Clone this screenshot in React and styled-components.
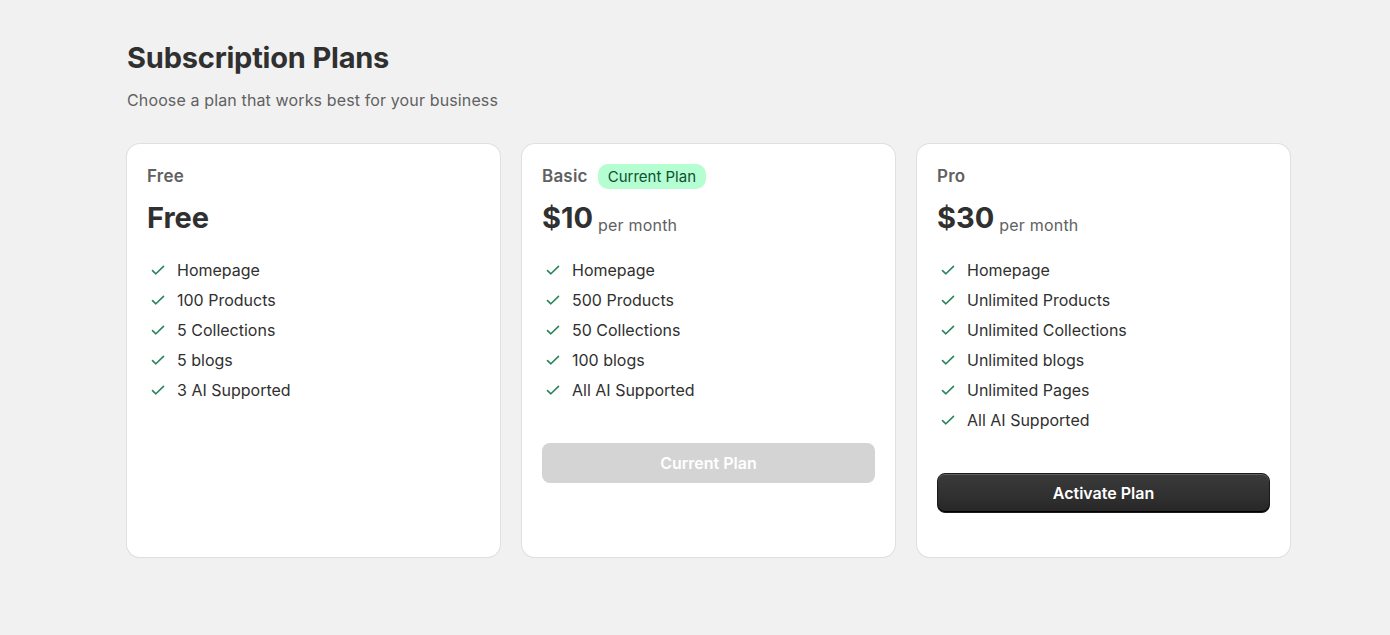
import React from 'react';
import styled, { createGlobalStyle } from 'styled-components';

const GlobalStyle = createGlobalStyle`
  body {
    margin: 0;
    background: #f1f1f1;
    font-family: Inter, "Noto Sans", sans-serif;
    color: #303030;
  }
`;

const plans = [
  {
    id: 'free',
    name: 'Free',
    price: 'Free',
    features: ['Homepage', '100 Products', '5 Collections', '5 blogs', '3 AI Supported']
  },
  {
    id: 'basic',
    name: 'Basic',
    price: '$10',
    period: 'per month',
    current: true,
    features: ['Homepage', '500 Products', '50 Collections', '100 blogs', 'All AI Supported']
  },
  {
    id: 'pro',
    name: 'Pro',
    price: '$30',
    period: 'per month',
    features: [
      'Homepage',
      'Unlimited Products',
      'Unlimited Collections',
      'Unlimited blogs',
      'Unlimited Pages',
      'All AI Supported'
    ]
  }
];

const CheckIcon = () => (
  <svg width="16" height="16" viewBox="0 0 16 16" fill="none">
    <path d="M2.5 8.6l3.4 3.2 7.6-7.4" stroke="#29845a" strokeWidth="1.6" strokeLinecap="round" strokeLinejoin="round" />
  </svg>
);

const App = () => {
  return (
    <>
      <GlobalStyle />
      <Page>
        <Title>Subscription Plans</Title>
        <Subtitle>Choose a plan that works best for your business</Subtitle>
        <Grid>
          {plans.map((plan) => (
            <Card key={plan.id}>
              <NameRow>
                <PlanName>{plan.name}</PlanName>
                {plan.current && <Badge>Current Plan</Badge>}
              </NameRow>
              <PriceRow>
                <Price>{plan.price}</Price>
                {plan.period && <Period>{plan.period}</Period>}
              </PriceRow>
              <FeatureList>
                {plan.features.map((f) => (
                  <Feature key={f}>
                    <CheckIcon />
                    {f}
                  </Feature>
                ))}
              </FeatureList>
              {plan.id !== 'free' && (
                <PlanButton disabled={plan.current} $primary={!plan.current}>
                  {plan.current ? 'Current Plan' : 'Activate Plan'}
                </PlanButton>
              )}
            </Card>
          ))}
        </Grid>
      </Page>
    </>
  );
};

export default App;

const Page = styled.div`
  padding: 40px 100px 40px 127px;
`;

const Title = styled.h1`
  margin: 0;
  font-size: 29px;
  line-height: 36px;
  font-weight: 700;
  color: #303030;
  letter-spacing: -0.2px;
`;

const Subtitle = styled.p`
  margin: 12px 0 0;
  font-size: 16px;
  line-height: 24px;
  color: #616161;
  letter-spacing: 0.13px;
`;

const Grid = styled.div`
  margin-top: 32px;
  display: grid;
  grid-template-columns: repeat(3, 1fr);
  gap: 22px;
`;

const Card = styled.div`
  background: #fff;
  border-radius: 13px;
  box-shadow: 0 0 0 1px #e0e0e0, 0 1px 1px rgba(0, 0, 0, 0.08);
  padding: 20px 20px 44px;
  display: flex;
  flex-direction: column;
`;

const NameRow = styled.div`
  display: flex;
  align-items: center;
  gap: 10px;
  height: 24px;
`;

const PlanName = styled.span`
  font-size: 17px;
  line-height: 24px;
  font-weight: 600;
  color: #616161;
  letter-spacing: 0.2px;
`;

const Badge = styled.span`
  background: #b4fed2;
  color: #0c5132;
  font-size: 15px;
  line-height: 25px;
  padding: 0 10px;
  border-radius: 10px;
`;

const PriceRow = styled.div`
  margin-top: 12px;
  display: flex;
  align-items: flex-end;
  gap: 5px;
  height: 36px;
`;

const Price = styled.span`
  font-size: 29px;
  line-height: 36px;
  font-weight: 700;
  color: #303030;
`;

const Period = styled.span`
  font-size: 16px;
  line-height: 22px;
  color: #616161;
  letter-spacing: 0.2px;
`;

const FeatureList = styled.ul`
  list-style: none;
  margin: 22px 0 0;
  padding: 0 0 0 3px;
  display: flex;
  flex-direction: column;
  gap: 6px;
`;

const Feature = styled.li`
  display: flex;
  align-items: center;
  gap: 11px;
  font-size: 16px;
  line-height: 24px;
  color: #303030;
`;

const PlanButton = styled.button`
  margin-top: 41px;
  height: 40px;
  width: 100%;
  border-radius: 8px;
  font-family: inherit;
  font-size: 16px;
  font-weight: 600;
  cursor: pointer;
  color: #fff;
  border: ${(p) => (p.$primary ? '1px solid #1a1a1a' : 'none')};
  background: ${(p) => (p.$primary ? 'linear-gradient(180deg, #3a3a3a 0%, #303030 60%, #262626 100%)' : '#d4d4d4')};
  box-shadow: ${(p) =>
    p.$primary ? 'inset 0 1px 0 rgba(255,255,255,0.2), inset 0 -1px 0 #000' : 'none'};
  &:disabled {
    cursor: default;
  }
`;
